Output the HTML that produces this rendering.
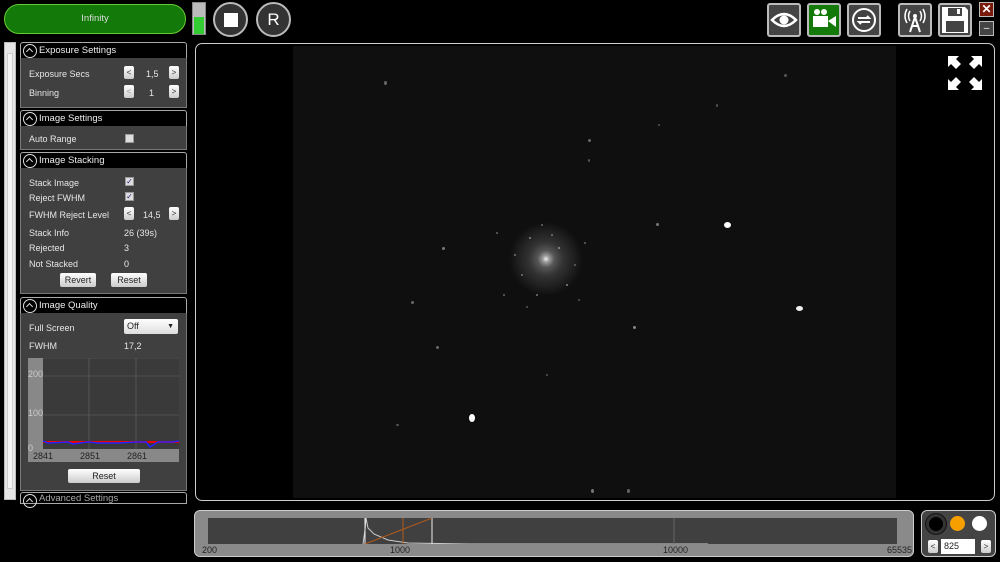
<!DOCTYPE html>
<html><head><style>
*{box-sizing:border-box;margin:0;padding:0}
body{width:1000px;height:562px;background:#000;position:relative;overflow:hidden;font-family:"Liberation Sans",sans-serif;font-size:9px;color:#ddd}
.a{position:absolute}
.hdr{position:absolute;left:20px;width:167px;height:17px;background:#000;border:1px solid #aaa;border-radius:3px 3px 0 0;color:#eee;font-size:9.5px;line-height:15px;padding-left:18px}
.hdr:before{content:"";position:absolute;left:2px;top:1px;width:12px;height:12px;border:1px solid #ddd;border-radius:50%}
.hdr:after{content:"";position:absolute;left:6px;top:6px;width:4px;height:4px;border-left:1px solid #ddd;border-top:1px solid #ddd;transform:rotate(45deg)}
.body{position:absolute;left:20px;width:167px;background:#404040;border:1px solid #777;border-top:none}
.lb{position:absolute;left:8px;font-size:9px;color:#e6e6e6}
.v{position:absolute;font-size:9px;color:#e6e6e6}
.btn{position:absolute;width:10px;height:13px;background:linear-gradient(#fff,#ccc);border-radius:2px;color:#333;font-size:8px;text-align:center;line-height:13px}
.cb{position:absolute;left:104px;width:9px;height:9px;background:#ddd;border:1px solid #999;color:#227;font-size:8px;line-height:8px;text-align:center}
.pb{position:absolute;height:14px;background:linear-gradient(#fff,#ccc);border-radius:2px;color:#222;font-size:9px;text-align:center;line-height:14px}
.tb{position:absolute;top:3px;width:34px;height:34px;background:#444;border:2px solid #bbb;border-radius:3px}
.s{position:absolute;border-radius:50%;background:#ccc}
.d{position:absolute;width:2px;height:2px;border-radius:50%;background:#666}
</style></head><body>
<div class="a" style="left:4px;top:4px;width:182px;height:30px;border-radius:15px;background:#137a0a;border:1px solid #6c3;color:#ddd;text-align:center;line-height:28px;font-size:9.5px">Infinity</div>
<div class="a" style="left:192px;top:2px;width:14px;height:33px;background:#bbb;border:1px solid #888"><div class="a" style="left:1px;top:14px;width:10px;height:17px;background:#3c3"></div></div>
<div class="a" style="left:213px;top:2px;width:35px;height:35px;border-radius:50%;background:#333;border:2px solid #bbb"><div class="a" style="left:9px;top:9px;width:14px;height:14px;background:#fff"></div></div>
<div class="a" style="left:256px;top:2px;width:35px;height:35px;border-radius:50%;background:#333;border:2px solid #bbb;color:#fff;font-size:17px;text-align:center;line-height:31px">R</div>

<div class="tb" style="left:767px"><svg width="30" height="30" viewBox="0 0 30 30"><path d="M3 15Q15 3 27 15Q15 27 3 15Z" fill="none" stroke="#fff" stroke-width="2.5"/><circle cx="15" cy="15" r="4.5" fill="#fff"/></svg></div>
<div class="tb" style="left:807px;background:#137a0a"><svg width="30" height="30" viewBox="0 0 30 30"><rect x="4" y="11" width="15" height="11" fill="#fff"/><path d="M19 16L27 11V22Z" fill="#fff"/><circle cx="8" cy="7" r="3" fill="#fff"/><circle cx="15" cy="7" r="3" fill="#fff"/></svg></div>
<div class="tb" style="left:847px"><svg width="30" height="30" viewBox="0 0 30 30"><circle cx="15" cy="15" r="11" fill="none" stroke="#fff" stroke-width="2"/><path d="M9 13H20L18 11M21 17H10L12 19" fill="none" stroke="#fff" stroke-width="2"/></svg></div>
<div class="tb" style="left:898px"><svg width="30" height="30" viewBox="0 0 30 30"><path d="M10 27L15 12L20 27M12 21H18" fill="none" stroke="#fff" stroke-width="2"/><circle cx="15" cy="11" r="2" fill="#fff"/><path d="M10 6Q7 11 10 16M20 6Q23 11 20 16M7 4Q3 11 7 18M23 4Q27 11 23 18" fill="none" stroke="#fff" stroke-width="1.5"/></svg></div>
<div class="tb" style="left:938px"><svg width="30" height="30" viewBox="0 0 30 30"><path d="M2 2H25L28 5V28H2Z" fill="#fff"/><rect x="8" y="3" width="14" height="8" fill="#444"/><rect x="17" y="4" width="3" height="5" fill="#fff"/><rect x="6" y="16" width="18" height="11" fill="#444"/></svg></div>
<div class="a" style="left:979px;top:2px;width:15px;height:15px;background:#7a1a0a;border:1px solid #bbb;color:#fff;font-size:12px;text-align:center;line-height:13px;font-weight:bold">✕</div>
<div class="a" style="left:979px;top:21px;width:15px;height:15px;background:#444;border:1px solid #bbb;color:#fff;font-size:10px;text-align:center;line-height:13px">–</div>

<div class="a" style="left:4px;top:42px;width:12px;height:458px;background:#e6e6e6;border:1px solid #bbb"><div class="a" style="left:2px;top:10px;width:6px;height:436px;background:#f4f4f4;border:1px solid #ccc"></div></div>

<div class="hdr" style="top:42px">Exposure Settings</div>
<div class="body" style="top:58px;height:50px">
<div class="lb" style="top:11px">Exposure Secs</div><div class="btn" style="left:103px;top:8px">&lt;</div><div class="v" style="left:125px;top:11px">1,5</div><div class="btn" style="left:148px;top:8px">&gt;</div>
<div class="lb" style="top:30px">Binning</div><div class="btn" style="left:103px;top:27px;color:#999">&lt;</div><div class="v" style="left:128px;top:30px">1</div><div class="btn" style="left:148px;top:27px">&gt;</div>
</div>
<div class="hdr" style="top:110px">Image Settings</div>
<div class="body" style="top:126px;height:24px"><div class="lb" style="top:8px">Auto Range</div><div class="cb" style="top:8px"></div></div>
<div class="hdr" style="top:152px">Image Stacking</div>
<div class="body" style="top:168px;height:126px">
<div class="lb" style="top:10px">Stack Image</div><div class="cb" style="top:9px">✓</div>
<div class="lb" style="top:25px">Reject FWHM</div><div class="cb" style="top:24px">✓</div>
<div class="lb" style="top:42px">FWHM Reject Level</div><div class="btn" style="left:103px;top:39px">&lt;</div><div class="v" style="left:122px;top:42px">14,5</div><div class="btn" style="left:148px;top:39px">&gt;</div>
<div class="lb" style="top:60px">Stack Info</div><div class="v" style="left:103px;top:60px">26 (39s)</div>
<div class="lb" style="top:75px">Rejected</div><div class="v" style="left:103px;top:75px">3</div>
<div class="lb" style="top:91px">Not Stacked</div><div class="v" style="left:103px;top:91px">0</div>
<div class="pb" style="left:39px;top:105px;width:36px">Revert</div><div class="pb" style="left:90px;top:105px;width:36px">Reset</div>
</div>
<div class="hdr" style="top:297px">Image Quality</div>
<div class="body" style="top:313px;height:178px">
<div class="lb" style="top:10px">Full Screen</div>
<div class="a" style="left:103px;top:6px;width:54px;height:15px;background:linear-gradient(#fff,#ddd);border-radius:2px;color:#222;font-size:9px;line-height:15px;padding-left:3px">Off<span style="position:absolute;right:4px;font-size:7px">▼</span></div>
<div class="lb" style="top:28px">FWHM</div><div class="v" style="left:103px;top:28px">17,2</div>
<div class="a" style="left:7px;top:45px;width:151px;height:104px;background:#3a3a3a">
<div class="a" style="left:0;top:0;width:15px;height:104px;background:#888"></div>
<div class="a" style="left:0;top:91px;width:151px;height:13px;background:#888"></div>
<svg class="a" style="left:0;top:0" width="151" height="104"><g stroke="#666" stroke-width="0.6"><path d="M15 0H151M15 18H151M15 57H151M61 0V91M108 0V91"/></g><path d="M15 84H151" stroke="#e00" stroke-width="2"/><path d="M15 83L20 85L40 84L45 86L60 84L70 85L90 85L110 84L118 84L122 89L130 84L145 84L151 83" fill="none" stroke="#22f" stroke-width="1.5"/></svg>
<div class="v" style="left:0;top:11px;color:#ccc">200</div><div class="v" style="left:0;top:50px;color:#ccc">100</div><div class="v" style="left:0;top:85px;color:#ccc">0</div>
<div class="v" style="left:5px;top:93px;color:#222">2841</div><div class="v" style="left:52px;top:93px;color:#222">2851</div><div class="v" style="left:99px;top:93px;color:#222">2861</div>
</div>
<div class="pb" style="left:47px;top:156px;width:72px">Reset</div>
</div>
<div class="hdr" style="top:492px;height:12px;line-height:12px;color:#aaa">Advanced Settings</div>

<div class="a" style="left:195px;top:43px;width:800px;height:458px;border:1.5px solid #ccc;border-radius:7px;background:#000;overflow:hidden">
<div class="a" style="left:97px;top:2px;width:603px;height:452px;background:#0f0f0f"></div>
<div class="a" style="left:310px;top:175px;width:80px;height:80px;border-radius:50%;background:radial-gradient(circle,#eee 0,#999 6%,#555 15%,#333 30%,rgba(15,15,15,0) 65%)"></div>
<div class="d" style="left:333px;top:193px;background:#888"></div><div class="d" style="left:362px;top:203px;background:#999"></div><div class="d" style="left:325px;top:230px;background:#777"></div><div class="d" style="left:370px;top:240px;background:#888"></div><div class="d" style="left:340px;top:250px;background:#777"></div><div class="d" style="left:318px;top:210px;background:#777"></div><div class="d" style="left:378px;top:220px;background:#666"></div><div class="d" style="left:355px;top:190px;background:#777"></div><div class="d" style="left:345px;top:180px;background:#666"></div><div class="d" style="left:307px;top:250px;background:#666"></div><div class="d" style="left:382px;top:255px;background:#555"></div><div class="d" style="left:300px;top:188px;background:#666"></div><div class="d" style="left:330px;top:262px;background:#555"></div><div class="d" style="left:388px;top:198px;background:#666"></div>
<div class="s" style="left:528px;top:178px;width:7px;height:6px;background:#fff"></div>
<div class="s" style="left:600px;top:262px;width:7px;height:5px;background:#eee"></div>
<div class="s" style="left:273px;top:370px;width:6px;height:8px;background:#fff"></div>
<div class="s" style="left:246px;top:203px;width:3px;height:3px;background:#777"></div>
<div class="s" style="left:188px;top:37px;width:3px;height:4px;background:#666"></div>
<div class="s" style="left:460px;top:179px;width:3px;height:3px;background:#777"></div>
<div class="s" style="left:437px;top:282px;width:3px;height:3px;background:#888"></div>
<div class="s" style="left:392px;top:95px;width:3px;height:3px;background:#666"></div>
<div class="s" style="left:215px;top:257px;width:3px;height:3px;background:#666"></div>
<div class="s" style="left:240px;top:302px;width:3px;height:3px;background:#666"></div>
<div class="s" style="left:588px;top:30px;width:3px;height:3px;background:#555"></div>
<div class="s" style="left:395px;top:445px;width:3px;height:4px;background:#777"></div>
<div class="s" style="left:431px;top:445px;width:3px;height:4px;background:#666"></div>
<div class="s" style="left:392px;top:115px;width:2px;height:3px;background:#555"></div>
<div class="s" style="left:520px;top:60px;width:2px;height:3px;background:#555"></div>
<div class="s" style="left:200px;top:380px;width:3px;height:2px;background:#555"></div>
<div class="s" style="left:462px;top:80px;width:2px;height:2px;background:#555"></div>
<div class="s" style="left:350px;top:330px;width:2px;height:2px;background:#555"></div>
<div class="a" style="left:752px;top:12px;width:34px;height:34px">
<svg width="34" height="34" viewBox="0 0 34 34" fill="#fff"><path d="M0 0H11L8 3L13 8L8 13L3 8L0 11Z"/><path d="M34 0V11L31 8L26 13L21 8L26 3L23 0Z"/><path d="M0 34V23L3 26L8 21L13 26L8 31L11 34Z"/><path d="M34 34H23L26 31L21 26L26 21L31 26L34 23Z"/></svg></div>
</div>

<div class="a" style="left:194px;top:510px;width:720px;height:47px;background:#8a8a8a;border:1.5px solid #ccc;border-radius:6px">
<div class="a" style="left:13px;top:7px;width:689px;height:26px;background:#404040"></div>
<svg class="a" style="left:13px;top:7px" width="689" height="26"><path d="M155 26L157 12L158 0L160 10L166 16L180 22L200 25L260 26L500 26" fill="none" stroke="#ccc" stroke-width="1"/><path d="M157 0V26M224 0V26" stroke="#eee"/><path d="M195 0V26M157 26L224 0" stroke="#b05a1a"/><path d="M466 0V26" stroke="#666"/></svg>
<div class="v" style="left:7px;top:34px;color:#222">200</div><div class="v" style="left:195px;top:34px;color:#222">1000</div><div class="v" style="left:468px;top:34px;color:#222">10000</div><div class="v" style="left:692px;top:34px;color:#222">65535</div>
</div>
<div class="a" style="left:921px;top:510px;width:75px;height:47px;background:#444;border:1.5px solid #ccc;border-radius:6px">
<div class="a" style="left:4px;top:3px;width:20px;height:20px;border-radius:50%;background:#000;border:3px solid #333;box-shadow:0 0 0 1px #111"></div>
<div class="a" style="left:28px;top:5px;width:15px;height:15px;border-radius:50%;background:#f5a000"></div>
<div class="a" style="left:50px;top:5px;width:15px;height:15px;border-radius:50%;background:#fff"></div>
<div class="btn" style="left:6px;top:29px">&lt;</div>
<div class="a" style="left:19px;top:28px;width:34px;height:15px;background:#fff;color:#222;font-size:9px;line-height:15px;padding-left:3px">825</div>
<div class="btn" style="left:59px;top:29px">&gt;</div>
</div>
</body></html>
